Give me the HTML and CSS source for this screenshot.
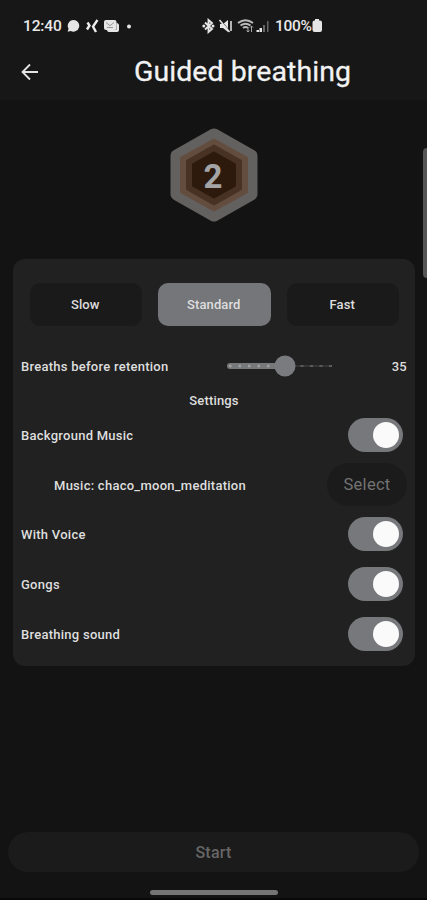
FILE: index.html
```html
<!DOCTYPE html>
<html lang="en">
<head>
<meta charset="utf-8">
<meta name="viewport" content="width=device-width, initial-scale=1">
<title>Guided breathing</title>
<link rel="stylesheet" href="styles.css">
</head>
<body>
<div class="screen">
  <header class="top">
    <div class="status">
      <div class="status-left">
        <span class="clock">12:40</span>
        <svg class="ic" width="66" height="16" viewBox="0 0 66 16">
          <path d="M6.500 2a5.800 5.800 0 1 1-2.800 10.900L.6 13.800l1-3A5.800 5.800 0 0 1 6.500 2z"/>
          <path d="M20.500 4.500l2 3-2.500 4M30.500 2l-4.500 6.500 3 5.500" fill="none" stroke="#eee" stroke-width="2.400"/>
          <rect x="37" y="2" width="12.500" height="10" rx="2"/><path d="M40 11.500h9.500V5q2.500 0 2.500 2.500V12q0 2-2 2h-8q-2 0-2-2z"/>
          <path d="M39 4.500l4 3.200 4-3.200M40 9.500h6" fill="none" stroke="#999" stroke-width="1"/>
          <circle cx="62" cy="8.500" r="2"/>
        </svg>
      </div>
      <div class="status-right">
        <svg class="ic" width="68" height="16" viewBox="0 0 68 16">
          <path d="M3 4.500l7 6.500-3.500 3V2L10 5l-7 6.500" fill="none" stroke="#e6e6e6" stroke-width="1.900"/><circle cx="1.800" cy="8" r="1.500"/><circle cx="11" cy="8" r="1.500"/>
          <path d="M18 6h3l5-4v12l-5-4h-3z"/><path d="M18.500 2l10 12" stroke="#171717" stroke-width="1"/><path d="M17.500 2l10 12M29 3v10" stroke="#e6e6e6" stroke-width="1.500"/>
          <path d="M36 5q7.500-5.500 15 0M38.500 7.500q5-3.500 10 0M41 10q2.500-2 5 0" fill="none" stroke="#bbb" stroke-width="2"/><path d="M46 9v5m-1.500-1.500L46 14l1.500-1.500M49.500 14V8m-1.500 1.500L49.500 8 51 9.500" fill="none" stroke="#aaa" stroke-width="1"/>
          <path d="M54.500 14v-2H57v2zM57.500 14v-4H60v4z"/><path d="M61 14V7h2v7zM65 14V3h1.500v11z" fill="#666"/>
        </svg>
        <span class="pct">100%</span>
        <svg class="ic" width="11" height="15" viewBox="0 0 11 15"><path d="M3 1h4v1.500h1q2 0 2 2V12q0 2-2 2H2.500q-2 0-2-2V4.500q0-2 2-2H3z"/></svg>
      </div>
    </div>
    <div class="appbar">
      <svg class="back" width="18" height="18" viewBox="0 0 18 18"><path d="M17 9H1.500M9 1.500L1.500 9 9 16.500" fill="none" stroke="#e4e4e4" stroke-width="1.800"/></svg>
      <h1>Guided breathing</h1>
    </div>
  </header>

  <main>
    <svg class="badge" width="88" height="96" viewBox="0 0 88 96">
      <g stroke-linejoin="round">
        <path d="M44 8L81 29V67L44 88L7 67V29Z" fill="#636160" stroke="#636160" stroke-width="13"/>
        <path d="M44 13L76.500 31V65L44 83L11.500 65V31Z" fill="#634d3e" stroke="#634d3e" stroke-width="3"/>
        <path d="M44 19L70.500 34V62L44 77L17.500 62V34Z" fill="#483223" stroke="#483223" stroke-width="3"/>
        <path d="M44 26L64.500 37.500V58.500L44 70L23.500 58.500V37.500Z" fill="#2d1a0d" stroke="#2d1a0d" stroke-width="3"/>
      </g>
      <text x="43" y="61" text-anchor="middle">2</text>
    </svg>

    <section class="card">
      <div class="segments">
        <button>Slow</button><button class="active">Standard</button><button>Fast</button>
      </div>
      <div class="row breaths">
        <span class="label">Breaths before retention</span>
        <svg class="slider" width="108" height="24" viewBox="0 0 108 24">
          <path d="M59 12H106" stroke="#343434" stroke-width="2"/>
          <path d="M59 12H106" stroke="#5b5b5b" stroke-width="2" stroke-dasharray="3 6.500" stroke-dashoffset="-6"/>
          <path d="M4 12H58" stroke="#77787a" stroke-width="6" stroke-linecap="round"/>
          <path d="M3 12H50" stroke="#a0a0a0" stroke-width="2.500" stroke-dasharray="2.500 7"/>
          <circle cx="59" cy="12" r="10.500" fill="#7a7b7f"/>
        </svg>
        <span class="value">35</span>
      </div>
      <div class="heading">Settings</div>
      <div class="row"><span>Background Music</span><i class="toggle"></i></div>
      <div class="row music"><span>Music: chaco_moon_meditation</span><button class="select">Select</button></div>
      <div class="row"><span>With Voice</span><i class="toggle"></i></div>
      <div class="row"><span>Gongs</span><i class="toggle"></i></div>
      <div class="row"><span>Breathing sound</span><i class="toggle"></i></div>
    </section>
  </main>

  <footer>
    <button class="start">Start</button>
    <div class="home"></div>
  </footer>
  <div class="edge"></div>
</div>
</body>
</html>
```
FILE: styles.css
```css
* { box-sizing: border-box; }
body { margin: 0; background: #131313; }
button { border: 0; padding: 0; margin: 0; font: inherit; color: inherit; letter-spacing: inherit; }
svg { display: block; flex: none; }
.screen {
  position: relative;
  width: 427px;
  height: 900px;
  overflow: hidden;
  display: flex;
  flex-direction: column;
  background: #131313;
  color: #dedede;
  font: 500 13px Roboto, sans-serif;
}
.top { height: 100px; background: #171717; }
.status { display: flex; height: 50px; padding: 16px 0 0 23px; }
.status-left, .status-right { display: flex; }
.status-right { margin-left: 69px; }
.clock, .pct { flex: none; height: 20px; font-size: 15.500px; line-height: 21px; color: #e8e8e8; white-space: nowrap; }
.clock { width: 38px; letter-spacing: -0.150px; }
.pct { width: 37px; margin-left: 5px; letter-spacing: -0.350px; }
.ic { fill: #e6e6e6; margin-top: 2px; }
.status-left .ic { margin-left: 6px; }
.appbar { display: flex; align-items: center; height: 44px; padding-left: 21px; }
h1 { margin: -2px 0 0 95px; font: 400 28.500px Roboto, sans-serif; letter-spacing: 0.060px; color: #f2f2f2; -webkit-text-stroke: 0.300px #f2f2f2; white-space: nowrap; }
main { height: 732px; padding: 27px 12px 0 13px; }
.badge { margin: 0 auto 0 157px; }
.badge text { font: 700 33px Roboto, sans-serif; fill: #a4a4a7; }
.card { height: 407px; margin-top: 36px; padding: 24px 8px 0; border-radius: 12px; background: #212121; }
.segments { display: grid; grid-template-columns: repeat(3, 112.500px); gap: 16px; padding-left: 8.500px; letter-spacing: 0.100px; }
.segments button { height: 43px; border-radius: 10px; background: #1a1a1a; padding-right: 1px; }
.segments .active { background: #75767a; }
.row { display: flex; align-items: center; justify-content: space-between; height: 49.700px; padding-right: 4px; letter-spacing: 0.260px; white-space: nowrap; }
.row > span { padding-top: 1px; }
.breaths { height: 40px; margin-top: 20px; padding-right: 0; }
.label { width: 147px; }
.breaths .slider { margin-left: 58px; }
.value { width: 74px; text-align: right; }
.heading { height: 24px; padding-top: 7px; text-align: center; letter-spacing: 0.150px; }
.music { padding: 0 0 0 33px; }
.select { width: 80px; height: 43px; border-radius: 22px; background: #1b1b1b; color: #737373; font-size: 16.500px; font-weight: 400; }
.toggle { display: flex; align-items: center; justify-content: flex-end; width: 55px; height: 34px; padding-right: 4px; border-radius: 17px; background: #77787b; }
.toggle::before { content: ""; width: 26px; height: 26px; border-radius: 50%; background: #fafafa; }
footer { height: 68px; padding: 0 8px; border-bottom: 2px solid #080808; }
.start { display: block; width: 411px; height: 40px; border-radius: 20px; background: #1b1b1b; color: #666; font-size: 16px; letter-spacing: 0.200px; }
.home { width: 128px; height: 5px; margin: 18px 0 0 142px; border-radius: 3px; background: #747474; }
.edge { position: absolute; left: 423px; top: 148px; width: 8px; height: 130px; border-radius: 4px; background: #555; }
```
